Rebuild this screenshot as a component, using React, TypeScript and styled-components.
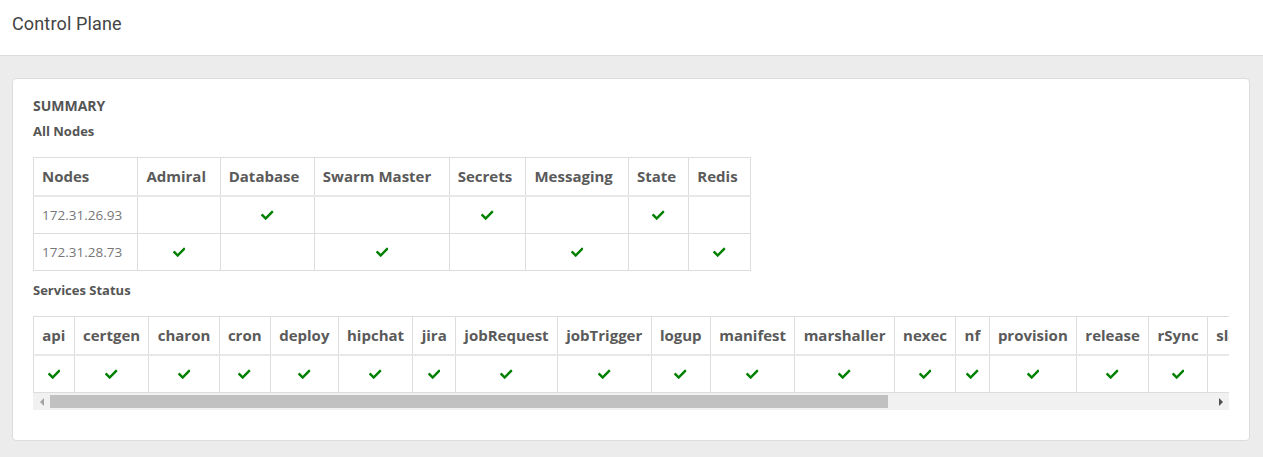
import styled, { createGlobalStyle } from "styled-components"
import { FaCheck } from "react-icons/fa"

const GlobalStyle = createGlobalStyle`
    html, body {
        margin: 0;
        padding: 0;
        background: #ececec;
        font-family: 'Open Sans', 'Liberation Sans', sans-serif;
        color: #555;
    }
`

const TopBar = styled.header`
    height: 55px;
    background: #fff;
    border-bottom: 1px solid #dcdcdc;
    display: flex;
    align-items: center;
    padding: 0 12px;
`

const PageTitle = styled.h1`
    margin: 0 0 8px 0;
    font-family: Roboto, 'Liberation Sans', sans-serif;
    font-weight: 400;
    font-size: 18px;
    letter-spacing: 0.15px;
    color: #444;
`

const Content = styled.main`
    padding: 22px 13px 16px 12px;
`

const Card = styled.section`
    background: #fff;
    border: 1px solid #dcdcdc;
    border-radius: 4px;
    padding: 17px 20px 30px 20px;
`

const SectionTitle = styled.h2`
    margin: 0 0 5px 0;
    font-size: 14px;
    font-weight: 700;
    line-height: 20px;
    color: #555;
    text-transform: uppercase;
`

const SubTitle = styled.h3`
    margin: 0 0 16px 0;
    font-size: 13px;
    font-weight: 700;
    line-height: 20px;
    color: #555;
`

const Table = styled.table<{ $width?: string }>`
    border-collapse: collapse;
    border: 1px solid #ddd;
    width: ${({ $width }) => $width || "auto"};
`

const NodesTable = styled(Table)`
    margin-bottom: 9px;
`

const Th = styled.th<{ $px?: number }>`
    border: 1px solid #ddd;
    border-bottom-width: 2px;
    border-bottom-color: #e8e8e8;
    padding: 8px ${({ $px }) => $px || 8}px;
    font-size: 15px;
    font-weight: 700;
    line-height: 21px;
    text-align: left;
    color: #5a5a5a;
    white-space: nowrap;
`

const Td = styled.td<{ $center?: boolean; $px?: number }>`
    border: 1px solid #ddd;
    padding: 8px ${({ $px }) => $px || 8}px;
    font-size: 13.5px;
    line-height: 20px;
    color: #777;
    text-align: ${({ $center }) => ($center ? "center" : "left")};
    white-space: nowrap;
`

const Scroller = styled.div`
    overflow: hidden;
    width: 100%;
`

const ScrollBar = styled.div`
    display: flex;
    align-items: center;
    height: 17px;
    background: #f1f1f1;
`

const ArrowButton = styled.div<{ $dir: "left" | "right"; $disabled?: boolean }>`
    width: 17px;
    height: 17px;
    display: flex;
    align-items: center;
    justify-content: center;
    flex-shrink: 0;
    &::before {
        content: "";
        width: 0;
        height: 0;
        border-top: 4px solid transparent;
        border-bottom: 4px solid transparent;
        ${({ $dir, $disabled }) =>
            $dir === "left"
                ? `border-right: 4px solid ${$disabled ? "#a3a3a3" : "#505050"};`
                : `border-left: 4px solid ${$disabled ? "#a3a3a3" : "#505050"};`}
    }
`

const Track = styled.div`
    flex: 1;
    height: 17px;
    display: flex;
    align-items: center;
`

const Thumb = styled.div`
    width: 72.1%;
    height: 13px;
    background: #c1c1c1;
`

const Check = styled(FaCheck)`
    color: #008000;
    font-size: 12.5px;
    vertical-align: -1px;
`

const nodeCols = ["Admiral", "Database", "Swarm Master", "Secrets", "Messaging", "State", "Redis"]

const nodes = [
    { ip: "172.31.26.93", roles: ["Database", "Secrets", "State"] },
    { ip: "172.31.28.73", roles: ["Admiral", "Swarm Master", "Messaging", "Redis"] },
]

const services = [
    "api", "certgen", "charon", "cron", "deploy", "hipchat", "jira", "jobRequest",
    "jobTrigger", "logup", "manifest", "marshaller", "nexec", "nf", "provision",
    "release", "rSync", "slack", "sync", "timeTrigger", "versionTrigger", "webhookTrigger",
]

export default function App() {
    return (
        <>
            <GlobalStyle />
            <TopBar>
                <PageTitle>Control Plane</PageTitle>
            </TopBar>
            <Content>
                <Card>
                    <SectionTitle>Summary</SectionTitle>
                    <SubTitle>All Nodes</SubTitle>
                    <NodesTable $width="718px">
                        <thead>
                            <tr>
                                <Th>Nodes</Th>
                                {nodeCols.map(c => <Th key={c}>{c}</Th>)}
                            </tr>
                        </thead>
                        <tbody>
                            {nodes.map(n => (
                                <tr key={n.ip}>
                                    <Td>{n.ip}</Td>
                                    {nodeCols.map(c => (
                                        <Td key={c} $center>{n.roles.includes(c) ? <Check /> : null}</Td>
                                    ))}
                                </tr>
                            ))}
                        </tbody>
                    </NodesTable>
                    <SubTitle>Services Status</SubTitle>
                    <Scroller>
                        <Table>
                            <thead>
                                <tr>
                                    {services.map(s => <Th key={s} $px={8.3}>{s}</Th>)}
                                </tr>
                            </thead>
                            <tbody>
                                <tr>
                                    {services.map(s => <Td key={s} $center $px={8.3}><Check /></Td>)}
                                </tr>
                            </tbody>
                        </Table>
                    </Scroller>
                    <ScrollBar>
                        <ArrowButton $dir="left" $disabled />
                        <Track>
                            <Thumb />
                        </Track>
                        <ArrowButton $dir="right" />
                    </ScrollBar>
                </Card>
            </Content>
        </>
    )
}
